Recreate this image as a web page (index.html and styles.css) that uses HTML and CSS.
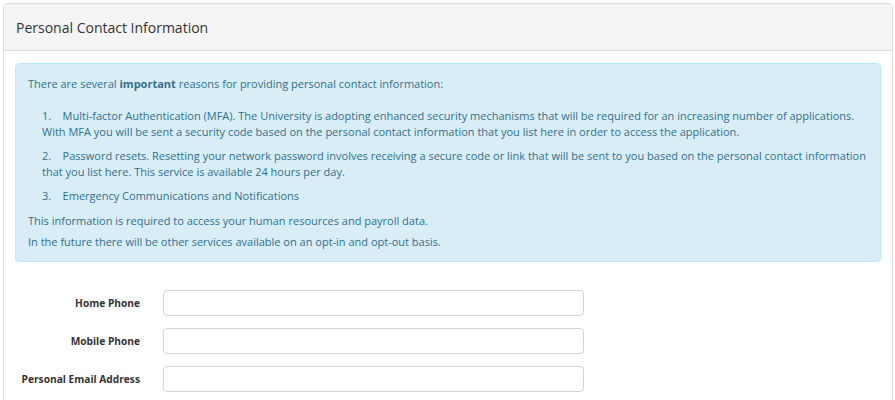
FILE: index.html
```html
<!DOCTYPE html>
<html>
<head>
<meta charset="utf-8">
<link rel="stylesheet" href="styles.css">
</head>
<body>
<div class="panel">
  <div class="panel-heading">Personal Contact Information</div>
  <div class="panel-body">
    <div class="alert">
      <p class="intro">There are several <strong>important</strong> reasons for providing personal contact information:</p>
      <p class="item">1.&nbsp;&nbsp;&nbsp; Multi-factor Authentication (MFA). The University is adopting enhanced security mechanisms that will be required for an increasing number of applications. With MFA you will be sent a security code based on the personal contact information that you list here in order to access the application.</p>
      <p class="item">2.&nbsp;&nbsp;&nbsp; Password resets. Resetting your network password involves receiving a secure code or link that will be sent to you based on the personal contact information that you list here. This service is available 24 hours per day.</p>
      <p class="item item-last">3.&nbsp;&nbsp;&nbsp; Emergency Communications and Notifications</p>
      <p class="note">This information is required to access your human resources and payroll data.</p>
      <p class="last">In the future there will be other services available on an opt-in and opt-out basis.</p>
    </div>
    <form class="form">
      <div class="row"><label class="label">Home Phone</label><input class="input" type="text"></div>
      <div class="row"><label class="label">Mobile Phone</label><input class="input" type="text"></div>
      <div class="row"><label class="label">Personal Email Address</label><input class="input" type="text"></div>
    </form>
  </div>
</div>
</body>
</html>
```
FILE: styles.css
```css
* { box-sizing: border-box; }
body {
  margin: 0;
  padding: 3px 2px 0 3px;
  background: #fff;
  font-family: "Open Sans", "Liberation Sans", sans-serif;
  color: #333;
}
.panel {
  border: 1px solid #ddd;
  border-bottom: none;
  border-radius: 4px 4px 0 0;
  height: 420px;
}
.panel-heading {
  background: #f5f5f5;
  border-bottom: 1px solid #ddd;
  height: 47px;
  padding: 0 12px;
  display: flex;
  align-items: center;
  font-size: 14px;
  color: #333;
}
.panel-body {
  padding: 12px 11px 0 11px;
}
.alert {
  background: #d9edf7;
  border: 1px solid #bce8f1;
  border-radius: 4px;
  color: #31708f;
  padding: 12px 12px 11px 12px;
  font-size: 11px;
  line-height: 16px;
}
.alert p { margin: 0; }
.alert strong { font-weight: 700; }
.intro { margin-bottom: 16px !important; }
.item { padding-left: 14px; margin-bottom: 8px !important; }
.item-last { margin-bottom: 9px !important; }
.note { margin-bottom: 5px !important; }
.form {
  margin-top: 28px;
  display: flex;
  flex-direction: column;
  gap: 12px;
}
.row {
  display: flex;
  align-items: center;
}
.label {
  width: 125px;
  text-align: right;
  font-weight: 700;
  font-size: 10.2px;
  white-space: nowrap;
  color: #333;
  margin-right: 23px;
}
.input {
  width: 421px;
  height: 26px;
  border: 1px solid #d3d3d3;
  border-radius: 4px;
  background: #fff;
  font-family: inherit;
}
```
